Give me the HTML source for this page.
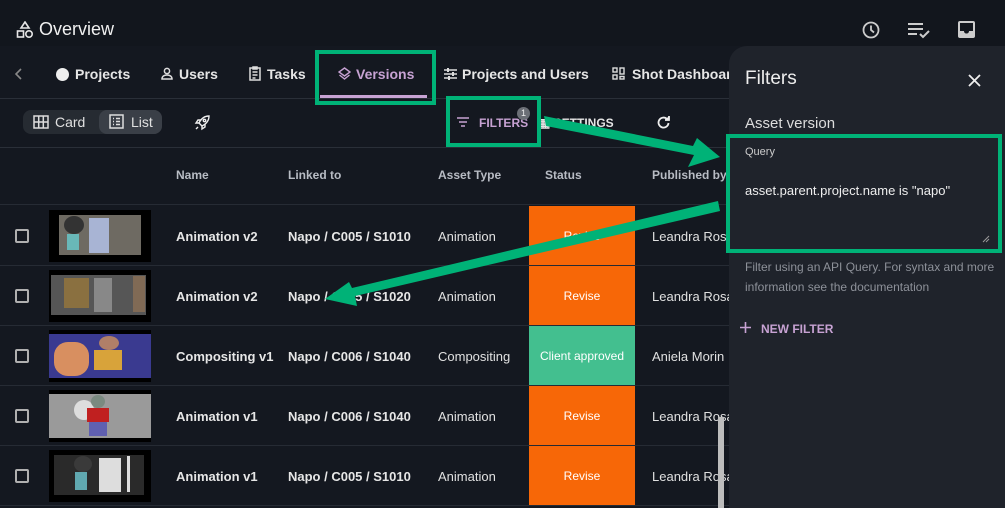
<!DOCTYPE html>
<html><head><meta charset="utf-8"><style>
*{box-sizing:border-box;margin:0;padding:0}
body{width:1005px;height:508px;overflow:hidden;background:#141820;font-family:"Liberation Sans",sans-serif;color:#e6e6e6;position:relative}
.a{position:absolute}
.hd{font-size:12px;font-weight:bold;color:#b8bcc4}
.cell{font-size:13px;font-weight:bold;color:#e6e6e6}
.norm{font-size:13px;color:#e0e0e0}
.st{position:absolute;left:529px;width:106px;height:59px;font-size:12px;color:#fff;display:flex;align-items:center;justify-content:center}
.cb{position:absolute;left:15px;width:14px;height:14px;border:2px solid #b0b0b0;border-radius:2px}
.th{position:absolute;left:49px;width:102px;height:52px;background:#000;overflow:hidden}
.line{position:absolute;left:0;width:729px;height:1px;background:#262b34}
.tab{position:absolute;top:66px;font-size:14px;font-weight:bold;color:#e6e6e6}
</style></head><body>
<div class="a" style="left:0;top:0;width:1005px;height:46px;background:#12161d"></div>
<svg class="a" style="left:16px;top:21px" width="18" height="18" viewBox="0 0 18 18" fill="none" stroke="#e6e6e6" stroke-width="1.6"><path d="M9 1L13 7H5Z"/><rect x="1.5" y="10" width="6" height="6"/><circle cx="13" cy="13" r="3.2"/></svg>
<div class="a" style="left:39px;top:19px;font-size:18px;color:#f0f0f0">Overview</div>
<svg class="a" style="left:862px;top:21px" width="18" height="18" viewBox="0 0 18 18" fill="none" stroke="#ccc" stroke-width="1.8"><circle cx="9" cy="9" r="7.5"/><path d="M9 4.5V9l3 2.5"/></svg>
<svg class="a" style="left:907px;top:21px" width="24" height="18" viewBox="0 0 24 18" fill="none" stroke="#ccc" stroke-width="2"><path d="M1 3h15M1 8h15M1 13h9M13 13l3 3 6-6"/></svg>
<svg class="a" style="left:958px;top:21px" width="17" height="17" viewBox="0 0 17 17"><rect x="0" y="0" width="17" height="17" rx="2" fill="#ccc"/><path d="M2 2h13v8h-4c0 1.5-1 2.5-2.5 2.5S6 11.5 6 10H2z" fill="#12161d"/></svg>

<svg class="a" style="left:15px;top:68px" width="8" height="12" viewBox="0 0 8 12" fill="none" stroke="#888" stroke-width="1.6"><path d="M6 1L1 6l5 5"/></svg>
<div class="tab" style="left:56px"><span style="display:inline-block;width:13px;height:13px;border-radius:50%;background:#eee;vertical-align:-2px;margin-right:6px"></span>Projects</div>
<div class="tab" style="left:161px"><svg width="12" height="13" viewBox="0 0 12 13" fill="none" stroke="#ddd" stroke-width="1.5" style="vertical-align:-1px;margin-right:6px"><circle cx="6" cy="4" r="2.6"/><path d="M1 12c0-3 2.5-4 5-4s5 1 5 4z"/></svg>Users</div>
<div class="tab" style="left:249px"><svg width="12" height="15" viewBox="0 0 12 15" fill="none" stroke="#ddd" stroke-width="1.5" style="vertical-align:-2px;margin-right:6px"><rect x="1" y="2" width="10" height="12"/><path d="M4 1h4v2H4zM3.5 6h5M3.5 9h5M3.5 12h3"/></svg>Tasks</div>
<div class="tab" style="left:338px;color:#c7a2d3"><svg width="13" height="13" viewBox="0 0 13 13" fill="none" stroke="#c7a2d3" stroke-width="1.4" style="vertical-align:-1px;margin-right:5px"><path d="M6.5 1L12 5 6.5 9 1 5z M1.5 8l5 4 5-4"/></svg>Versions</div>
<div class="a" style="left:320px;top:95px;width:107px;height:3px;background:#c7a2d3"></div>
<div class="tab" style="left:444px"><svg width="13" height="12" viewBox="0 0 13 12" stroke="#ddd" stroke-width="1.6" style="vertical-align:-1px;margin-right:5px"><path d="M0 2h13M0 6h13M0 10h13"/><path d="M4 0v4M9 4v4M5 8v4" stroke-width="2"/></svg>Projects and Users</div>
<div class="tab" style="left:612px"><svg width="13" height="13" viewBox="0 0 13 13" fill="none" stroke="#ddd" stroke-width="1.4" style="vertical-align:-1px;margin-right:7px"><rect x="1" y="1" width="4" height="4"/><rect x="8" y="1" width="4" height="6"/><rect x="1" y="8" width="4" height="4"/><rect x="8" y="9.5" width="4" height="2.5"/></svg>Shot Dashboard</div>
<div class="line" style="top:98px;background:#2a2f38"></div>

<div class="a" style="left:23px;top:110px;width:139px;height:24px;border-radius:8px;background:#262b32"></div>
<div class="a" style="left:99px;top:110px;width:63px;height:24px;border-radius:8px;background:#3a3f47"></div>
<svg class="a" style="left:33px;top:115px" width="16" height="14" viewBox="0 0 16 14" fill="none" stroke="#ddd" stroke-width="1.5"><rect x="1" y="1" width="14" height="12"/><path d="M1 7h14M5.7 1v12M10.3 1v12"/></svg>
<div class="a" style="left:55px;top:114px;font-size:14px;color:#e0e0e0">Card</div>
<svg class="a" style="left:109px;top:114px" width="15" height="15" viewBox="0 0 15 15" fill="none" stroke="#ddd" stroke-width="1.5"><rect x="1" y="1" width="13" height="13"/><path d="M4 4.5h1M7 4.5h4M4 7.5h1M7 7.5h4M4 10.5h1M7 10.5h4"/></svg>
<div class="a" style="left:131px;top:114px;font-size:14px;color:#e0e0e0">List</div>
<svg class="a" style="left:194px;top:115px" width="16" height="16" viewBox="0 0 16 16" fill="none" stroke="#eee" stroke-width="1.4"><path d="M15 1c-5 0-8 3-10 7l3 3c4-2 7-5 7-10z"/><circle cx="10.5" cy="5.5" r="1.2"/><path d="M5 8H2l2-3h3M8 11v3l3-2V9M4 12l-2 2"/></svg>

<svg class="a" style="left:457px;top:117px" width="12" height="10" viewBox="0 0 12 10" stroke="#c7a2d3" stroke-width="1.5"><path d="M0 1h12M2 5h8M4 9h4"/></svg>
<div class="a" style="left:479px;top:116px;font-size:12px;font-weight:bold;color:#c7a2d3">FILTERS</div>
<div class="a" style="left:517px;top:107px;width:13px;height:13px;border-radius:50%;background:#6b6f76;font-size:9px;color:#eee;text-align:center;line-height:13px">1</div>
<div class="a" style="left:539px;top:116px;font-size:12px;font-weight:bold;color:#e6e6e6">&#9638; SETTINGS</div>
<svg class="a" style="left:656px;top:115px" width="15" height="15" viewBox="0 0 15 15" fill="none" stroke="#eee" stroke-width="1.8"><path d="M12.5 8a5 5 0 1 1-1.5-4"/><path d="M13 1v4H9" fill="#eee"/></svg>
<div class="line" style="top:147px;background:#2a2f38"></div>

<div class="a hd" style="left:176px;top:168px">Name</div>
<div class="a hd" style="left:288px;top:168px">Linked to</div>
<div class="a hd" style="left:438px;top:168px">Asset Type</div>
<div class="a hd" style="left:545px;top:168px">Status</div>
<div class="a hd" style="left:652px;top:168px">Published by</div>
<div class="line" style="top:204px"></div>

<div class="line" style="top:265px"></div><div class="line" style="top:325px"></div><div class="line" style="top:385px"></div><div class="line" style="top:445px"></div><div class="line" style="top:505px"></div>

<div class="cb" style="top:229px"></div><div class="cb" style="top:289px"></div><div class="cb" style="top:349px"></div><div class="cb" style="top:409px"></div><div class="cb" style="top:469px"></div>

<div class="th" style="top:210px"><div class="a" style="left:10px;top:5px;width:82px;height:40px;background:#6e6a62"></div><div class="a" style="left:40px;top:8px;width:20px;height:35px;background:#a8b4d4"></div><div class="a" style="left:15px;top:6px;width:20px;height:18px;border-radius:50%;background:#333"></div><div class="a" style="left:18px;top:24px;width:12px;height:16px;background:#69b8b8"></div></div>
<div class="th" style="top:270px"><div class="a" style="left:2px;top:5px;width:95px;height:40px;background:#565656"></div><div class="a" style="left:15px;top:8px;width:25px;height:30px;background:#8a7040"></div><div class="a" style="left:45px;top:8px;width:18px;height:34px;background:#888"></div><div class="a" style="left:84px;top:6px;width:12px;height:36px;background:#806a55"></div></div>
<div class="th" style="top:330px"><div class="a" style="left:0;top:4px;width:102px;height:44px;background:#3a3a90"></div><div class="a" style="left:5px;top:12px;width:35px;height:34px;border-radius:40%;background:#d88f60"></div><div class="a" style="left:45px;top:20px;width:28px;height:20px;background:#d8a33a"></div><div class="a" style="left:50px;top:6px;width:20px;height:14px;border-radius:50%;background:#b07f68"></div></div>
<div class="th" style="top:390px"><div class="a" style="left:0;top:4px;width:102px;height:44px;background:#9a9a9a"></div><div class="a" style="left:25px;top:10px;width:20px;height:20px;border-radius:50%;background:#ddd"></div><div class="a" style="left:38px;top:18px;width:22px;height:14px;background:#c02020"></div><div class="a" style="left:40px;top:32px;width:18px;height:14px;background:#6060b0"></div><div class="a" style="left:42px;top:5px;width:14px;height:13px;border-radius:50%;background:#7a8a80"></div></div>
<div class="th" style="top:450px"><div class="a" style="left:5px;top:5px;width:90px;height:40px;background:#2a2a2a"></div><div class="a" style="left:50px;top:8px;width:22px;height:34px;background:#ddd"></div><div class="a" style="left:78px;top:6px;width:3px;height:36px;background:#ddd"></div><div class="a" style="left:25px;top:6px;width:18px;height:16px;border-radius:50%;background:#3a3a3a"></div><div class="a" style="left:26px;top:22px;width:12px;height:18px;background:#60a8b0"></div></div>

<div class="a cell" style="left:176px;top:229px">Animation v2</div>
<div class="a cell" style="left:176px;top:289px">Animation v2</div>
<div class="a cell" style="left:176px;top:349px">Compositing v1</div>
<div class="a cell" style="left:176px;top:409px">Animation v1</div>
<div class="a cell" style="left:176px;top:469px">Animation v1</div>
<div class="a cell" style="left:288px;top:229px">Napo / C005 / S1010</div>
<div class="a cell" style="left:288px;top:289px">Napo / C005 / S1020</div>
<div class="a cell" style="left:288px;top:349px">Napo / C006 / S1040</div>
<div class="a cell" style="left:288px;top:409px">Napo / C006 / S1040</div>
<div class="a cell" style="left:288px;top:469px">Napo / C005 / S1010</div>
<div class="a norm" style="left:438px;top:229px">Animation</div>
<div class="a norm" style="left:438px;top:289px">Animation</div>
<div class="a norm" style="left:438px;top:349px">Compositing</div>
<div class="a norm" style="left:438px;top:409px">Animation</div>
<div class="a norm" style="left:438px;top:469px">Animation</div>
<div class="st" style="top:206px;background:#f76707">Revise</div>
<div class="st" style="top:266px;background:#f76707">Revise</div>
<div class="st" style="top:326px;background:#43bf8f">Client approved</div>
<div class="st" style="top:386px;background:#f76707">Revise</div>
<div class="st" style="top:446px;background:#f76707">Revise</div>
<div class="a norm" style="left:652px;top:229px">Leandra Rosa</div>
<div class="a norm" style="left:652px;top:289px">Leandra Rosa</div>
<div class="a norm" style="left:652px;top:349px">Aniela Morin</div>
<div class="a norm" style="left:652px;top:409px">Leandra Rosa</div>
<div class="a norm" style="left:652px;top:469px">Leandra Rosa</div>
<div class="a" style="left:718px;top:417px;width:6px;height:91px;background:#bdbdbd"></div>

<div class="a" style="left:729px;top:46px;width:276px;height:462px;background:#1f232b;border-top-left-radius:18px"></div>
<div class="a" style="left:745px;top:68px;font-size:19px;color:#eee">Filters</div>
<svg class="a" style="left:968px;top:74px" width="13" height="13" viewBox="0 0 13 13" stroke="#eee" stroke-width="1.8"><path d="M1 1l11 11M12 1L1 12"/></svg>
<div class="a" style="left:745px;top:115px;font-size:15px;color:#ddd">Asset version</div>
<div class="a" style="left:745px;top:146px;font-size:11px;color:#ccc">Query</div>
<div class="a" style="left:745px;top:183px;font-size:13px;color:#eee">asset.parent.project.name is "napo"</div>
<svg class="a" style="left:982px;top:235px" width="8" height="8" viewBox="0 0 8 8" stroke="#999" stroke-width="1"><path d="M1 7L7 1M4 7l3-3"/></svg>
<div class="a" style="left:745px;top:257px;font-size:12px;color:#8d9199;line-height:20px;width:255px">Filter using an API Query. For syntax and more information see the documentation</div>
<svg class="a" style="left:740px;top:322px" width="11" height="11" viewBox="0 0 11 11" stroke="#c7a2d3" stroke-width="1.6"><path d="M5.5 0v11M0 5.5h11"/></svg>
<div class="a" style="left:761px;top:322px;font-size:12px;font-weight:bold;color:#c7a2d3">NEW FILTER</div>

<div class="a" style="left:315px;top:50px;width:121px;height:55px;border:4px solid #00b277"></div>
<div class="a" style="left:446px;top:96px;width:95px;height:51px;border:4px solid #00b277"></div>
<div class="a" style="left:726px;top:134px;width:276px;height:119px;border:4px solid #00b277"></div>
<svg class="a" style="left:0;top:0" width="1005" height="508">
<polygon fill="#00b277" points="544,116 546,126 694,155 688,167 720,157 697,138 693,146"/>
<polygon fill="#00b277" points="718,201 720,211 355,296 357,306 325,299 349,282 352,288"/>
</svg>
</body></html>
